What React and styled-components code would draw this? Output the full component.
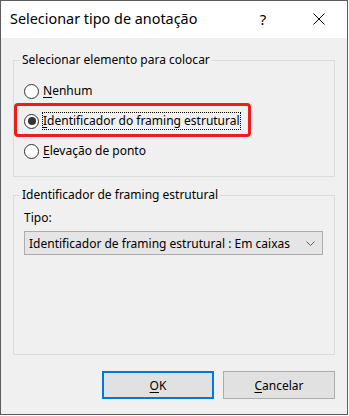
import React from "react";
import styled, { createGlobalStyle } from "styled-components";

const Global = createGlobalStyle`
  html, body { margin: 0; padding: 0; background: #ffffff; }
  body { font-family: "Noto Sans", "Segoe UI", sans-serif; }
`;

const Window = styled.div`
  box-sizing: border-box;
  width: 348px;
  height: 415px;
  border: 1px solid #5c5c5c;
  background: #f0f0f0;
  display: flex;
  flex-direction: column;
  font-family: "Noto Sans", sans-serif;
  font-size: 12px;
  color: #000;
`;

const TitleBar = styled.div`
  height: 37px;
  background: #ffffff;
  display: flex;
  align-items: center;
  padding-left: 9px;
  padding-right: 5px;
`;

const Title = styled.div`
  flex: 1;
  font-size: 14.4px;
  line-height: 20px;
  margin-top: -1px;
`;

const TitleButton = styled.div`
  width: ${(p) => p.$w}px;
  margin-right: ${(p) => p.$mr || 0}px;
  display: flex;
  justify-content: center;
  align-items: center;
  font-size: 15px;
  line-height: 20px;
  margin-top: -1px;
`;

const Body = styled.div`
  flex: 1;
  display: flex;
  flex-direction: column;
  padding: 14px 12px 0 12px;
`;

const Group = styled.fieldset`
  margin: ${(p) => p.$mt}px 0 0 0;
  padding: 0 0 ${(p) => p.$pb}px 0;
  border: 1px solid #dcdcdc;
  min-width: 0;
  display: flex;
  flex-direction: column;
`;

const Legend = styled.legend`
  margin-left: 6px;
  padding: 0 2px 0 2px;
  line-height: 16px;
  font-size: 12px;
`;

const RadioList = styled.div`
  display: flex;
  flex-direction: column;
  padding-top: 8px;
`;

const RadioRow = styled.label`
  position: relative;
  height: 30px;
  display: flex;
  align-items: center;
  padding-left: 10px;

  ${(p) =>
    p.$highlight &&
    `
    &::after {
      content: "";
      position: absolute;
      left: 0;
      top: -3px;
      width: 237px;
      height: 34px;
      box-sizing: border-box;
      border: 3px solid #ee1c1c;
      border-radius: 4px;
      pointer-events: none;
    }
  `}
`;

const RadioCircle = styled.span`
  box-sizing: border-box;
  width: 15px;
  height: 15px;
  border-radius: 50%;
  border: 1px solid #333333;
  background: #ffffff;
  display: flex;
  align-items: center;
  justify-content: center;
  flex-shrink: 0;

  &::before {
    content: "";
    width: 8px;
    height: 8px;
    border-radius: 50%;
    background: ${(p) => (p.$checked ? "#333333" : "transparent")};
  }
`;

const RadioText = styled.span`
  margin-left: 4px;
  line-height: 16px;
  outline: ${(p) => (p.$focus ? "1px dotted #000" : "none")};
  outline-offset: 0px;
`;

const Key = styled.span`
  text-decoration: underline;
  text-underline-offset: 2px;
`;

const FieldLabel = styled.div`
  margin: 7px 0 0 10px;
  line-height: 16px;
`;

const Combo = styled.div`
  box-sizing: border-box;
  margin: 5px 0 0 10px;
  width: 299px;
  height: 24px;
  background: #e5e5e5;
  border: 1px solid #acacac;
  display: flex;
  align-items: center;
  padding: 0 7px 0 4px;
`;

const ComboText = styled.span`
  flex: 1;
  white-space: nowrap;
  overflow: hidden;
`;

const Footer = styled.div`
  display: flex;
  justify-content: flex-end;
  gap: 9px;
  margin-top: 16px;
`;

const Button = styled.div`
  box-sizing: border-box;
  width: 112px;
  height: 28px;
  background: #e1e1e1;
  border: ${(p) => (p.$default ? "2px solid #0078d7" : "1px solid #adadad")};
  display: flex;
  align-items: center;
  justify-content: center;
`;

function Radio({ checked, focus, highlight, children }) {
  return (
    <RadioRow $highlight={highlight}>
      <RadioCircle $checked={checked} />
      <RadioText $focus={focus}>{children}</RadioText>
    </RadioRow>
  );
}

export default function App() {
  return (
    <>
      <Global />
      <Window>
        <TitleBar>
          <Title>Selecionar tipo de anotação</Title>
          <TitleButton $w={30} $mr={18}>?</TitleButton>
          <TitleButton $w={46}>
            <svg width="12" height="12" viewBox="0 0 12 12">
              <path d="M0.5 0.5 L11.5 11.5 M11.5 0.5 L0.5 11.5" stroke="#000" strokeWidth="1" />
            </svg>
          </TitleButton>
        </TitleBar>
        <Body>
          <Group $mt={0} $pb={10}>
            <Legend>Selecionar elemento para colocar</Legend>
            <RadioList>
              <Radio>
                <Key>N</Key>enhum
              </Radio>
              <Radio checked focus highlight>
                <Key>I</Key>dentificador do framing estrutural
              </Radio>
              <Radio>
                <Key>E</Key>levação de ponto
              </Radio>
            </RadioList>
          </Group>
          <Group $mt={10} $pb={99}>
            <Legend>Identificador de framing estrutural</Legend>
            <FieldLabel>Tipo:</FieldLabel>
            <Combo>
              <ComboText>Identificador de framing estrutural : Em caixas</ComboText>
              <svg width="9" height="5" viewBox="0 0 9 5">
                <path d="M0.5 0.5 L4.5 4.5 L8.5 0.5" stroke="#606060" strokeWidth="1" fill="none" />
              </svg>
            </Combo>
          </Group>
          <Footer>
            <Button $default>
              <span>
                <Key>O</Key>K
              </span>
            </Button>
            <Button>
              <span>
                <Key>C</Key>ancelar
              </span>
            </Button>
          </Footer>
        </Body>
      </Window>
    </>
  );
}
